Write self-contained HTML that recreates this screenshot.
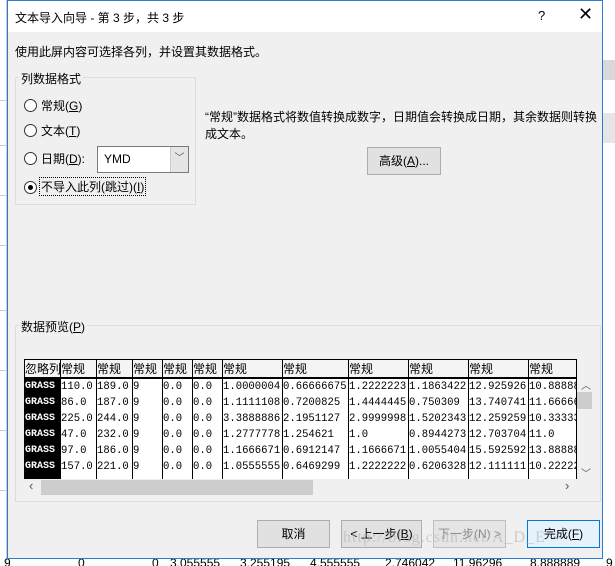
<!DOCTYPE html>
<html><head><meta charset="utf-8"><style>
*{margin:0;padding:0;box-sizing:border-box}
body{width:615px;height:566px;overflow:hidden;background:#fff;position:relative;font-family:"Liberation Sans","Noto Sans CJK SC",sans-serif;font-size:12px;color:#000}
.a{position:absolute}
.dlg{left:7px;top:0;width:596px;height:559px;border:1px solid #2b7bd6;background:#f0f0f0}
.title{left:0;top:0;width:594px;height:31px;background:#fff}
.grp{border:1px solid #dcdcdc}
.radio{width:13px;height:13px;border:1px solid #333;border-radius:50%;background:#fff}
.btn{border:1px solid #adadad;background:#e1e1e1;text-align:center;line-height:26px;font-size:12px}
table{border-collapse:collapse;font-family:"Liberation Mono","Noto Sans CJK SC",monospace;font-size:10.6px}
td{border-left:1px solid #000;height:16px;padding:0;white-space:nowrap;overflow:hidden;line-height:16px}
th{border-left:1px solid #000;font-weight:normal;text-align:left;height:17px;border-bottom:2px solid #000;padding:0;font-family:"Liberation Sans","Noto Sans CJK SC",sans-serif;font-size:12px;overflow:hidden;white-space:nowrap}
td.k{background:#000;color:#fff;font-weight:bold;font-size:10px}
.u{text-decoration:underline}
.gl{position:absolute;left:0;width:7px;height:1px;background:#ccc}
</style></head><body>
<div class="a" style="left:0;top:0;width:7px;height:566px;background:#fff;border-right:1px solid #ccc"></div>
<div class="gl" style="top:100px"></div><div class="gl" style="top:145px"></div><div class="gl" style="top:195px"></div><div class="gl" style="top:245px"></div><div class="gl" style="top:310px"></div><div class="gl" style="top:370px"></div><div class="gl" style="top:430px"></div><div class="gl" style="top:490px"></div>
<div class="a" style="left:603px;top:60px;width:12px;height:20px;background:#d9d9d9"></div>
<div class="a" style="left:603px;top:113px;width:12px;height:30px;background:#e6e6e6"></div>
<div class="a" style="left:0;top:557px;width:615px;height:9px;font-size:12px;line-height:12px;overflow:hidden;color:#000;white-space:nowrap;font-family:'Liberation Sans',sans-serif"><span class="a" style="left:4px">9</span><span class="a" style="left:78px">0</span><span class="a" style="left:152px">0</span><span class="a" style="left:170px">3.055555</span><span class="a" style="left:240px">3.255195</span><span class="a" style="left:310px">4.555555</span><span class="a" style="left:385px">2.746042</span><span class="a" style="left:453px">11.96296</span><span class="a" style="left:530px">8.888889</span><span class="a" style="left:606px">9</span></div>

<div class="a dlg">
 <div class="a title"></div>
 <div class="a" style="left:7px;top:8px;font-size:12px">文本导入向导 - 第 3 步，共 3 步</div>
 <div class="a" style="left:530px;top:7px;font-size:13px">?</div>
 <div class="a" style="left:570px;top:3px;font-size:18px;font-weight:300">✕</div>
 <div class="a" style="left:7px;top:42px">使用此屏内容可选择各列，并设置其数据格式。</div>

 <div class="a grp" style="left:7px;top:76px;width:181px;height:128px"></div>
 <div class="a" style="left:11px;top:69px;background:#f0f0f0;padding:0 2px">列数据格式</div>
 <div class="a radio" style="left:16px;top:98px"></div><div class="a" style="left:33px;top:96px">常规(<span class="u">G</span>)</div>
 <div class="a radio" style="left:16px;top:123px"></div><div class="a" style="left:33px;top:121px">文本(<span class="u">T</span>)</div>
 <div class="a radio" style="left:16px;top:151px"></div><div class="a" style="left:33px;top:149px">日期(<span class="u">D</span>):</div>
 <div class="a" style="left:89px;top:145px;width:92px;height:27px;border:1px solid #7a7a7a;background:#fff"><span class="a" style="left:6px;top:5px">YMD</span><div class="a" style="left:72px;top:0;width:18px;height:25px;background:#e5e5e5;border-left:1px solid #ccc;text-align:center;line-height:24px;font-size:10px;color:#555">﹀</div></div>
 <div class="a radio" style="left:16px;top:180px"><div class="a" style="left:3px;top:3px;width:5px;height:5px;border-radius:50%;background:#000"></div></div>
 <div class="a" style="left:31px;top:176px;border:1px dotted #000;padding:0 1px">不导入此列(跳过)(<span class="u">I</span>)</div>

 <div class="a" style="left:197px;top:108px;width:396px;line-height:17px">“常规”数据格式将数值转换成数字，日期值会转换成日期，其余数据则转换成文本。</div>
 <div class="a btn" style="left:359px;top:146px;width:74px;height:28px">高级(<span class="u">A</span>)...</div>

 <div class="a grp" style="left:7px;top:324px;width:586px;height:177px"></div>
 <div class="a" style="left:11px;top:317px;background:#f0f0f0;padding:0 2px">数据预览(<span class="u">P</span>)</div>
 <div class="a" style="left:16px;top:358px;width:552px;height:120px;background:#fff;border-top:1px solid #000;overflow:hidden">
 <table style="table-layout:fixed;width:560px">
 <colgroup><col style="width:36px"><col style="width:36px"><col style="width:36px"><col style="width:30px"><col style="width:30px"><col style="width:30px"><col style="width:60px"><col style="width:66px"><col style="width:60px"><col style="width:60px"><col style="width:60px"><col style="width:56px"></colgroup>
 <tr style="background:#f4f4f4"><th>忽略列</th><th>常规</th><th>常规</th><th>常规</th><th>常规</th><th>常规</th><th>常规</th><th>常规</th><th>常规</th><th>常规</th><th>常规</th><th>常规</th></tr>
 <tr><td class="k">GRASS</td><td>110.0</td><td>189.0</td><td>9</td><td>0.0</td><td>0.0</td><td>1.0000004</td><td>0.66666675</td><td>1.2222223</td><td>1.1863422</td><td>12.925926</td><td>10.88888</td></tr>
 <tr><td class="k">GRASS</td><td>86.0</td><td>187.0</td><td>9</td><td>0.0</td><td>0.0</td><td>1.1111108</td><td>0.7200825</td><td>1.4444445</td><td>0.750309</td><td>13.740741</td><td>11.66666</td></tr>
 <tr><td class="k">GRASS</td><td>225.0</td><td>244.0</td><td>9</td><td>0.0</td><td>0.0</td><td>3.3888886</td><td>2.1951127</td><td>2.9999998</td><td>1.5202343</td><td>12.259259</td><td>10.33333</td></tr>
 <tr><td class="k">GRASS</td><td>47.0</td><td>232.0</td><td>9</td><td>0.0</td><td>0.0</td><td>1.2777778</td><td>1.254621</td><td>1.0</td><td>0.8944273</td><td>12.703704</td><td>11.0</td></tr>
 <tr><td class="k">GRASS</td><td>97.0</td><td>186.0</td><td>9</td><td>0.0</td><td>0.0</td><td>1.1666671</td><td>0.6912147</td><td>1.1666671</td><td>1.0055404</td><td>15.592592</td><td>13.88888</td></tr>
 <tr><td class="k">GRASS</td><td>157.0</td><td>221.0</td><td>9</td><td>0.0</td><td>0.0</td><td>1.0555555</td><td>0.6469299</td><td>1.2222222</td><td>0.6206328</td><td>12.111111</td><td>10.22222</td></tr>
 <tr><td class="k" style="height:10px"></td><td></td><td></td><td></td><td></td><td></td><td></td><td></td><td></td><td></td><td></td><td></td></tr>
 </table></div>
 <div class="a" style="left:568px;top:358px;width:1px;height:120px;background:#000"></div>
 <div class="a" style="left:569px;top:376px;width:15px;height:102px;background:#f0f0f0"></div>
 <div class="a" style="left:573px;top:376px;font-size:10px;color:#555">︿</div>
 <div class="a" style="left:569px;top:391px;width:15px;height:17px;background:#cdcdcd"></div>
 <div class="a" style="left:573px;top:464px;font-size:10px;color:#555">﹀</div>
 <div class="a" style="left:16px;top:478px;width:568px;height:16px;background:#f0f0f0"></div>
 <div class="a" style="left:33px;top:479px;width:272px;height:15px;background:#cdcdcd"></div>
 <div class="a" style="left:21px;top:477px;font-size:13px;color:#555">‹</div>
 <div class="a" style="left:557px;top:477px;font-size:13px;color:#555">›</div>

 <div class="a btn" style="left:249px;top:519px;width:73px;height:28px">取消</div>
 <div class="a btn" style="left:333px;top:519px;width:81px;height:28px">&lt; 上一步(<span class="u">B</span>)</div>
 <div class="a btn" style="left:425px;top:519px;width:73px;height:28px;color:#8a8a8a;border-color:#bfbfbf;background:#e5e5e5">下一步(N) &gt;</div>
 <div class="a btn" style="left:519px;top:519px;width:73px;height:28px;border:1px solid #0078d7;background:#e5f1fb">完成(<span class="u">F</span>)</div>
 <div class="a" style="left:335px;top:528px;font-family:'Liberation Serif',serif;font-size:16px;color:rgba(180,180,180,0.6);letter-spacing:1px">http://blog.csdn.net/A_D_E</div>
</div>
</body></html>
